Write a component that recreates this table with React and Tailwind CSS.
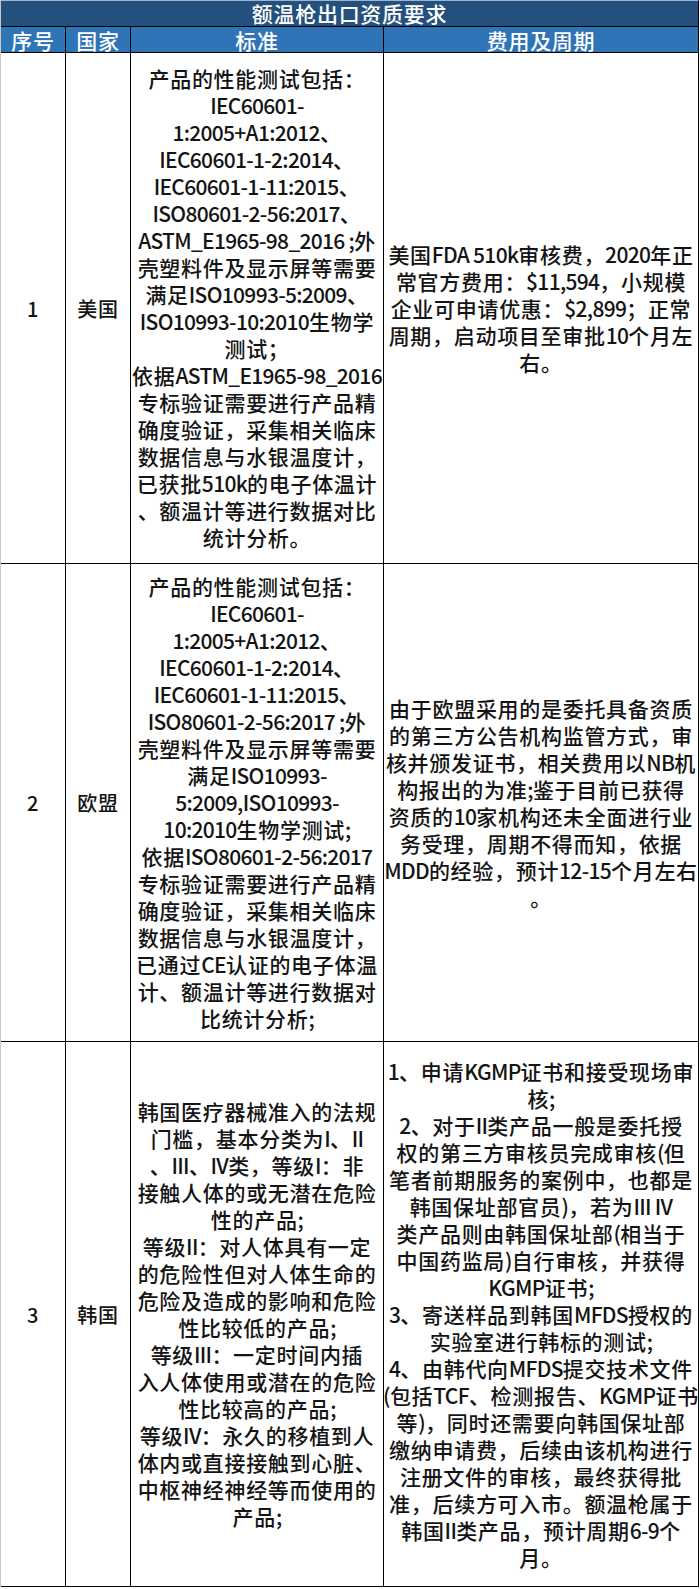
import React from 'react';

const rows = [
  {
    no: '1',
    country: '美国',
    h: 'h-[511px]',
    std: [
      '产品的性能测试包括：',
      'IEC60601-',
      '1:2005+A1:2012、',
      'IEC60601-1-2:2014、',
      'IEC60601-1-11:2015、',
      'ISO80601-2-56:2017、',
      'ASTM_E1965-98_2016 ;外',
      '壳塑料件及显示屏等需要',
      '满足ISO10993-5:2009、',
      'ISO10993-10:2010生物学',
      '测试；',
      '依据ASTM_E1965-98_2016',
      '专标验证需要进行产品精',
      '确度验证，采集相关临床',
      '数据信息与水银温度计，',
      '已获批510k的电子体温计',
      '、额温计等进行数据对比',
      '统计分析。',
    ],
    fee: [
      '美国FDA 510k审核费，2020年正',
      '常官方费用：$11,594，小规模',
      '企业可申请优惠：$2,899；正常',
      '周期，启动项目至审批10个月左',
      '右。',
    ],
  },
  {
    no: '2',
    country: '欧盟',
    h: 'h-[478px]',
    std: [
      '产品的性能测试包括：',
      'IEC60601-',
      '1:2005+A1:2012、',
      'IEC60601-1-2:2014、',
      'IEC60601-1-11:2015、',
      'ISO80601-2-56:2017 ;外',
      '壳塑料件及显示屏等需要',
      '满足ISO10993-',
      '5:2009,ISO10993-',
      '10:2010生物学测试;',
      '依据ISO80601-2-56:2017',
      '专标验证需要进行产品精',
      '确度验证，采集相关临床',
      '数据信息与水银温度计，',
      '已通过CE认证的电子体温',
      '计、额温计等进行数据对',
      '比统计分析;',
    ],
    fee: [
      '由于欧盟采用的是委托具备资质',
      '的第三方公告机构监管方式，审',
      '核并颁发证书，相关费用以NB机',
      '构报出的为准;鉴于目前已获得',
      '资质的10家机构还未全面进行业',
      '务受理，周期不得而知，依据',
      'MDD的经验，预计12-15个月左右',
      '。',
    ],
  },
  {
    no: '3',
    country: '韩国',
    h: 'h-[545px]',
    std: [
      '韩国医疗器械准入的法规',
      '门槛，基本分类为I、II',
      '、III、IV类，等级I：非',
      '接触人体的或无潜在危险',
      '性的产品;',
      '等级II：对人体具有一定',
      '的危险性但对人体生命的',
      '危险及造成的影响和危险',
      '性比较低的产品;',
      '等级III：一定时间内插',
      '入人体使用或潜在的危险',
      '性比较高的产品;',
      '等级IV：永久的移植到人',
      '体内或直接接触到心脏、',
      '中枢神经神经等而使用的',
      '产品;',
    ],
    fee: [
      '1、申请KGMP证书和接受现场审',
      '核;',
      '2、对于II类产品一般是委托授',
      '权的第三方审核员完成审核(但',
      '笔者前期服务的案例中，也都是',
      '韩国保址部官员)，若为III IV',
      '类产品则由韩国保址部(相当于',
      '中国药监局)自行审核，并获得',
      'KGMP证书;',
      '3、寄送样品到韩国MFDS授权的',
      '实验室进行韩标的测试;',
      '4、由韩代向MFDS提交技术文件',
      '(包括TCF、检测报告、KGMP证书',
      '等)，同时还需要向韩国保址部',
      '缴纳申请费，后续由该机构进行',
      '注册文件的审核，最终获得批',
      '准，后续方可入市。额温枪属于',
      '韩国II类产品，预计周期6-9个',
      '月。',
    ],
  },
];

// 半角字符单独收窄，模拟表格里黑体的等宽半角
function Line({ text }) {
  const parts = text.split(/([\x20-\x7e]+)/).filter(Boolean);
  return (
    <div className="whitespace-nowrap">
      {parts.map((p, i) =>
        /^[\x20-\x7e]+$/.test(p)
          ? <span key={i} className="tracking-[-0.7px]">{p}</span>
          : <span key={i}>{p}</span>
      )}
    </div>
  );
}

function Lines({ lines }) {
  return (
    <div className="text-center">
      {lines.map((l, i) => <Line key={i} text={l} />)}
    </div>
  );
}

export default function App() {
  return (
    <div className="w-[700px] min-h-[1589px] bg-white font-['Noto_Sans_CJK_SC',sans-serif] font-medium text-[21px] leading-[27px] tracking-[0.7px] text-[#141414]">
      <div className="w-[699px] border-l border-[#c8c8c8]">
        {/* 标题 */}
        <div className="h-[27px] bg-[#24507d] border-t border-[#9fb4cc] border-b border-b-black border-r border-r-black flex items-center justify-center text-white text-[21px]">
          额温枪出口资质要求
        </div>

        {/* 表头 */}
        <div className="grid grid-cols-[65px_65px_253px_1fr] h-[26px] bg-[#2f74b6] text-white text-[21px] border-b border-black">
          <div className="flex items-center justify-center border-r border-black">序号</div>
          <div className="flex items-center justify-center border-r border-black">国家</div>
          <div className="flex items-center justify-center border-r border-black">标准</div>
          <div className="flex items-center justify-center border-r border-black">费用及周期</div>
        </div>

        {rows.map(r => (
          <div key={r.no} className={`grid grid-cols-[65px_65px_253px_1fr] ${r.h} border-b border-black`}>
            <div className="flex items-center justify-center border-r border-black text-[20px]">{r.no}</div>
            <div className="flex items-center justify-center border-r border-black text-[20px]">{r.country}</div>
            <div className="flex items-center justify-center border-r border-black overflow-hidden">
              <Lines lines={r.std} />
            </div>
            <div className="flex items-center justify-center border-r border-black overflow-hidden">
              <Lines lines={r.fee} />
            </div>
          </div>
        ))}
      </div>
    </div>
  );
}
